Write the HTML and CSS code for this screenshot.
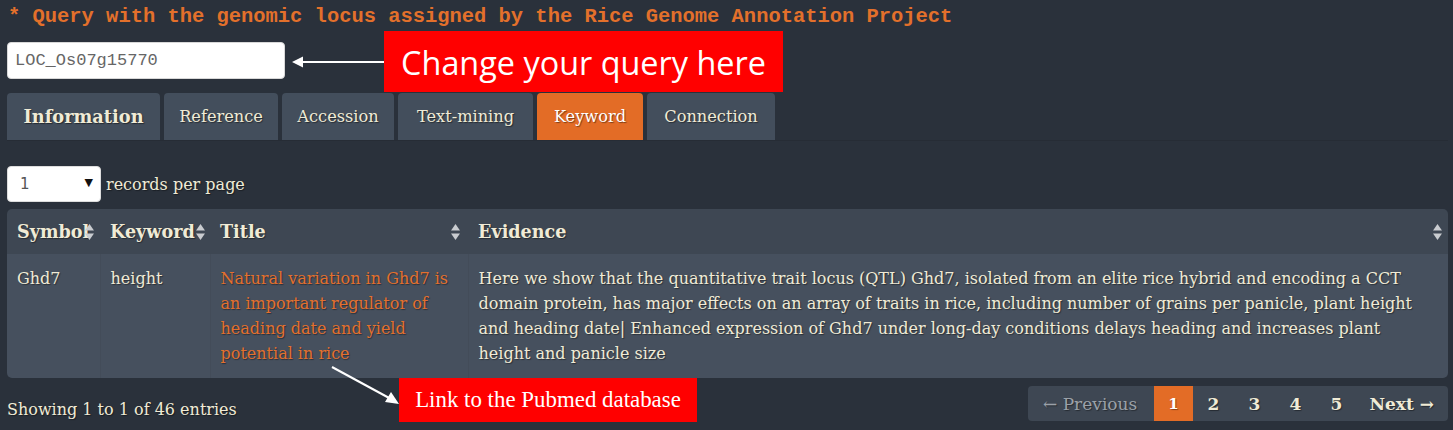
FILE: index.html
```html
<!DOCTYPE html>
<html>
<head>
<meta charset="utf-8">
<link rel="stylesheet" href="styles.css">
</head>
<body>
<div class="page">
  <div class="heading">* Query with the genomic locus assigned by the Rice Genome Annotation Project</div>
  <div class="query-row">
    <input class="query-input" type="text" value="LOC_Os07g15770">
    <div class="note note-query">
      <svg class="arrow-left" width="92" height="14" viewBox="0 0 92 14"><line x1="8" y1="7" x2="92" y2="7" stroke="#fff" stroke-width="2"/><polygon points="0,7 11,1.5 11,12.5" fill="#fff"/></svg>
      <span class="note-box note-box-big">Change your query here</span>
    </div>
  </div>
  <div class="tabs">
    <div class="tab tab-bold">Information</div>
    <div class="tab">Reference</div>
    <div class="tab">Accession</div>
    <div class="tab">Text-mining</div>
    <div class="tab tab-active">Keyword</div>
    <div class="tab">Connection</div>
  </div>
  <div class="length-row">
    <div class="select"><span>1</span><span class="caret">▼</span></div>
    <span class="length-label">records per page</span>
  </div>
  <table class="grid">
    <thead>
      <tr>
        <th class="c-sym">Symbol<svg class="sort" width="9" height="16" viewBox="0 0 9 16"><polygon points="4.5,0 9,6.5 0,6.5" fill="#c9ccd0"/><polygon points="0,9.5 9,9.5 4.5,16" fill="#c9ccd0"/></svg></th>
        <th class="c-key">Keyword<svg class="sort" width="9" height="16" viewBox="0 0 9 16"><polygon points="4.5,0 9,6.5 0,6.5" fill="#c9ccd0"/><polygon points="0,9.5 9,9.5 4.5,16" fill="#c9ccd0"/></svg></th>
        <th class="c-title">Title<svg class="sort" width="9" height="16" viewBox="0 0 9 16"><polygon points="4.5,0 9,6.5 0,6.5" fill="#c9ccd0"/><polygon points="0,9.5 9,9.5 4.5,16" fill="#c9ccd0"/></svg></th>
        <th class="c-ev">Evidence<svg class="sort" width="9" height="16" viewBox="0 0 9 16"><polygon points="4.5,0 9,6.5 0,6.5" fill="#c9ccd0"/><polygon points="0,9.5 9,9.5 4.5,16" fill="#c9ccd0"/></svg></th>
      </tr>
    </thead>
    <tbody>
      <tr>
        <td>Ghd7</td>
        <td>height</td>
        <td class="link">Natural variation in Ghd7 is an important regulator of heading date and yield potential in rice</td>
        <td>Here we show that the quantitative trait locus (QTL) Ghd7, isolated from an elite rice hybrid and encoding a CCT domain protein, has major effects on an array of traits in rice, including number of grains per panicle, plant height and heading date| Enhanced expression of Ghd7 under long-day conditions delays heading and increases plant height and panicle size</td>
      </tr>
    </tbody>
  </table>
  <div class="footer">
    <div class="info">Showing 1 to 1 of 46 entries</div>
    <div class="note note-link">
      <svg class="arrow-diag" width="70" height="40" viewBox="0 0 70 40"><line x1="1" y1="1" x2="60" y2="33" stroke="#fff" stroke-width="2"/><polygon points="68,38 54,36 60,26" fill="#fff"/></svg>
      <span class="note-box note-box-small">Link to the Pubmed database</span>
    </div>
    <div class="pager">
      <span class="pg pg-prev">← Previous</span>
      <span class="pg pg-num pg-active">1</span>
      <span class="pg pg-num">2</span>
      <span class="pg pg-num">3</span>
      <span class="pg pg-num">4</span>
      <span class="pg pg-num">5</span>
      <span class="pg pg-next">Next →</span>
    </div>
  </div>
</div>
</body>
</html>
```

FILE: styles.css
```css
html, body {
  margin: 0;
  padding: 0;
  background: #2a313b;
}
body {
  font-family: "DejaVu Serif", "Liberation Serif", serif;
  color: #f0ebd6;
  width: 1453px;
  height: 430px;
  overflow: hidden;
}
.page {
  padding: 6px 5px 0 7px;
  position: relative;
}
.heading {
  font-family: "Liberation Mono", "DejaVu Sans Mono", monospace;
  font-weight: bold;
  font-size: 20.45px;
  line-height: 22px;
  color: #e3702b;
  padding-left: 1px;
}
.query-row {
  margin-top: 14px;
  display: flex;
  align-items: center;
  position: relative;
}
.query-input {
  width: 278px;
  height: 37px;
  box-sizing: border-box;
  border: 1px solid #d8d8d8;
  border-radius: 4px;
  background: #fff;
  padding: 0 7px;
  font-family: "Liberation Mono", "DejaVu Sans Mono", monospace;
  font-size: 17px;
  color: #666;
  outline: none;
}
.note {
  position: absolute;
  display: flex;
  align-items: center;
}
.note-query {
  left: 285px;
  top: -11px;
}
.arrow-left {
  display: block;
}
.note-box {
  background: #ff0000;
  color: #fff;
  display: flex;
  align-items: center;
  justify-content: center;
  box-sizing: border-box;
}
.note-box-big {
  width: 399px;
  height: 61px;
  font-family: "Open Sans", "Noto Sans", sans-serif;
  font-size: 32.4px;
}
.tabs {
  margin-top: 14px;
  display: flex;
  gap: 4px;
  height: 47px;
  border-bottom: 1px solid #262c35;
}
.tab {
  background: #434e5c;
  border-radius: 4px 4px 0 0;
  font-size: 16.2px;
  display: flex;
  align-items: center;
  justify-content: center;
  text-shadow: 1px 1px 1px rgba(0,0,0,0.45);
}
.tab:nth-child(1) { width: 153px; }
.tab:nth-child(2) { width: 114px; }
.tab:nth-child(3) { width: 112px; }
.tab:nth-child(4) { width: 135px; }
.tab:nth-child(5) { width: 106px; }
.tab:nth-child(6) { width: 128px; }
.tab-bold { font-weight: bold; font-size: 17.8px; }
.tab-active { background: #e36c26; color: #fff; }
.length-row {
  margin-top: 25px;
  display: flex;
  align-items: center;
  gap: 5px;
}
.select {
  width: 94px;
  height: 36px;
  box-sizing: border-box;
  background: #fff;
  border: 1px solid #ddd;
  border-radius: 4px;
  display: flex;
  align-items: center;
  justify-content: space-between;
  padding: 0 7px 0 12px;
  font-family: "DejaVu Sans", sans-serif;
  font-size: 15px;
  color: #555;
}
.caret {
  font-size: 11px;
  color: #111;
  margin-top: -4px;
}
.length-label {
  font-size: 16px;
  text-shadow: 1px 1px 1px rgba(0,0,0,0.4);
}
.grid {
  margin-top: 7px;
  width: 1441px;
  border-collapse: collapse;
  table-layout: fixed;
  font-size: 16px;
  text-shadow: 1px 1px 1px rgba(0,0,0,0.4);
}
.grid th {
  background: #3e4753;
  height: 45px;
  text-align: left;
  font-weight: bold;
  font-size: 17.6px;
  padding: 0 0 0 10px;
  position: relative;
  white-space: nowrap;
  overflow: visible;
}
.grid thead th:first-child { border-top-left-radius: 5px; }
.grid thead th:last-child { border-top-right-radius: 5px; }
.sort {
  position: absolute;
  right: 6px;
  top: 15px;
}
.c-sym { width: 83px; }
.c-key { width: 100px; }
.c-title { width: 248px; }
.c-ev { width: auto; }
.c-sym .sort { right: 6px; }
.c-key .sort { right: 5px; }
.c-title .sort { right: 8px; }
.c-ev .sort { right: 6px; }
.grid td {
  background: #46505e;
  vertical-align: top;
  padding: 12px 14px 12px 10px;
  line-height: 25px;
}
.grid td:first-child { border-bottom-left-radius: 5px; }
.grid td:last-child { border-bottom-right-radius: 5px; padding-right: 12px; }
.grid td + td { border-left: 1px solid #434c59; }
.link {
  color: #e3702e;
}
.footer {
  display: flex;
  align-items: center;
  justify-content: space-between;
  margin-top: 8px;
  position: relative;
}
.info {
  font-size: 16px;
  margin-top: 12px;
  text-shadow: 1px 1px 1px rgba(0,0,0,0.4);
}
.note-link {
  left: 319px;
  top: -20px;
  align-items: flex-start;
}
.arrow-diag { display: block; margin-left: 5px; }
.note-box-small {
  width: 298px;
  height: 44px;
  font-family: "Liberation Serif", serif;
  font-size: 22.9px;
  margin-left: -2px;
  margin-top: 12px;
}
.pager {
  display: flex;
  align-items: stretch;
  height: 35px;
  background: #3e4753;
  border-radius: 4px;
  width: 420px;
  box-sizing: border-box;
  padding: 0 14px 0 15px;
  font-size: 17px;
  text-shadow: 1px 1px 1px rgba(0,0,0,0.4);
}
.pg {
  display: flex;
  align-items: center;
  justify-content: center;
}
.pg-prev {
  color: #9ba1a8;
  width: 111px;
  justify-content: flex-start;
}
.pg-num {
  width: 41px;
  font-weight: bold;
}
.pg-active {
  background: #e36c26;
  color: #fff;
  width: 39px;
  font-size: 15px;
}
.pg-next {
  font-weight: bold;
  margin-left: auto;
}
```
